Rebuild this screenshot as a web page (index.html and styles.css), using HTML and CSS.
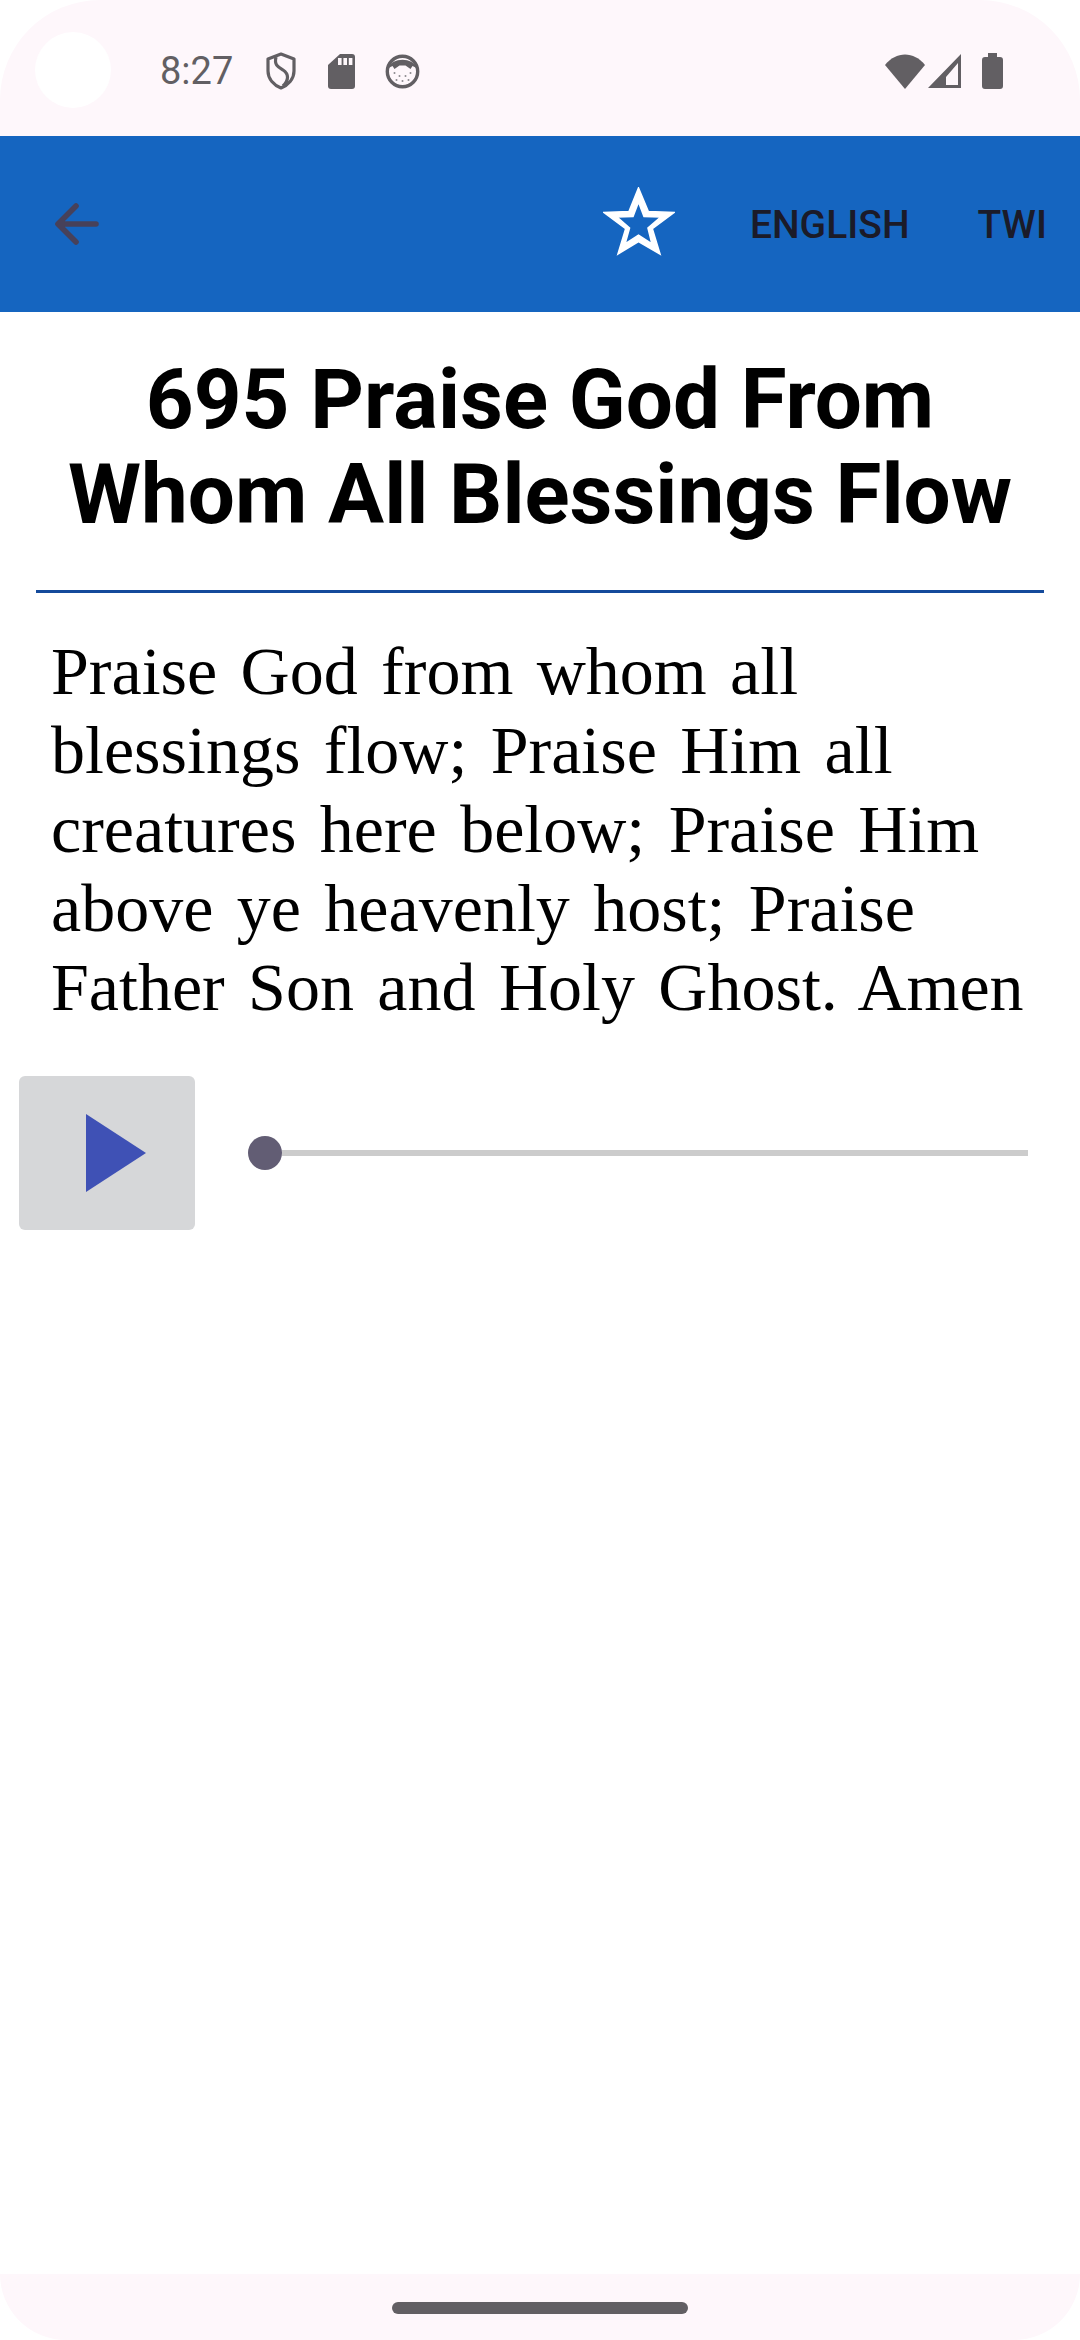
FILE: index.html
```html
<!DOCTYPE html>
<html lang="en">
<head>
    <meta charset="UTF-8">
    <meta name="viewport" content="width=device-width, initial-scale=1.0">
    <title>695 Praise God From Whom All Blessings Flow</title>
    <link rel="stylesheet" href="styles.css">
</head>
<body>
    <div class="status-bar">
        <div class="camera"></div>
        <span class="time">8:27</span>
        <svg class="ic-shield" width="30" height="38" viewBox="0 0 30 38">
            <path d="M15 2 L28 7 V19 C28 27 22 33 15 36 C8 33 2 27 2 19 V7 Z" fill="none" stroke="#625f63" stroke-width="3.2" stroke-linejoin="round"/>
            <path d="M10 5 C8 13 12 15 17 18 C23 22 23 28 17 34" fill="none" stroke="#625f63" stroke-width="3.2"/>
        </svg>
        <svg class="ic-sd" width="27" height="35" viewBox="0 0 27 35">
            <path d="M12 0 H24 Q27 0 27 3 V32 Q27 35 24 35 H3 Q0 35 0 32 V11 Z" fill="#625f63"/>
            <rect x="10" y="4" width="3.6" height="7" fill="#fef7fb"/>
            <rect x="15.4" y="4" width="3.6" height="7" fill="#fef7fb"/>
            <rect x="20.8" y="4" width="3.6" height="7" fill="#fef7fb"/>
        </svg>
        <svg class="ic-face" width="35" height="35" viewBox="0 0 34 35">
            <circle cx="17" cy="17.5" r="15.2" fill="#fef7fb" stroke="#625f63" stroke-width="3.4"/>
            <path d="M3 14 C6 3 28 3 31 14 L27 12 L25 15 L20 11.5 H14 L9 15 L7 12 Z" fill="#625f63"/>
            <g fill="#8d8a8e">
                <circle cx="9" cy="19" r="1"/><circle cx="14" cy="22" r="1"/><circle cx="20" cy="22" r="1"/><circle cx="25" cy="19" r="1"/>
                <circle cx="11" cy="26" r="1"/><circle cx="17" cy="27" r="1"/><circle cx="23" cy="26" r="1"/>
            </g>
        </svg>
        <div class="status-right">
            <svg class="ic-wifi" width="40" height="35" viewBox="0 0 40 35">
                <path d="M0 11 C11 -3 29 -3 40 11 L20 35 Z" fill="#625f63"/>
            </svg>
            <svg class="ic-signal" width="34" height="34" viewBox="0 0 34 34">
                <path fill-rule="evenodd" d="M33 0 V34 H0 Z M30 9 L18 23 V31 H30 Z" fill="#625f63"/>
            </svg>
            <svg class="ic-battery" width="21" height="36" viewBox="0 0 21 36">
                <path d="M6 0 H15 V4 H18 Q21 4 21 7 V33 Q21 36 18 36 H3 Q0 36 0 33 V7 Q0 4 3 4 H6 Z" fill="#625f63"/>
            </svg>
        </div>
    </div>

    <div class="app-bar">
        <svg class="ic-back" width="44" height="44" viewBox="0 0 44 44">
            <path d="M41 22 H4 M21 4 L3 22 L21 40" fill="none" stroke="#47415a" stroke-width="5.6" stroke-linejoin="round" stroke-linecap="round"/>
        </svg>
        <svg class="ic-star" width="72" height="70" viewBox="0 0 72 70">
            <path fill-rule="evenodd" d="M35.5 1 L45.3 24.5 L71 25.5 L49.3 41.7 L57 67 L35.5 54.5 L15 67 L22.7 41.7 L1 25.5 L26 24.5 Z M35.5 15 L30 29.5 L14 30 L26.5 41 L22 57 L35.5 48.3 L49 57 L45 41 L57.7 30 L41 29.5 Z" fill="#fff" stroke="#fff" stroke-width="1.6"/>
        </svg>
        <span class="tab tab-english">ENGLISH</span>
        <span class="tab">TWI</span>
    </div>

    <h1 class="title">695 Praise God From<br>Whom All Blessings Flow</h1>
    <hr class="divider">
    <p class="lyrics">Praise God from whom all blessings flow; Praise Him all creatures here below; Praise Him above ye heavenly host; Praise Father Son and Holy Ghost. Amen</p>

    <div class="player">
        <div class="play-btn">
            <svg width="60" height="78" viewBox="0 0 60 78">
                <path d="M0 0 L60 39 L0 78 Z" fill="#3f51b5"/>
            </svg>
        </div>
        <div class="slider">
            <div class="thumb"></div>
            <div class="track"></div>
        </div>
    </div>

    <div class="nav-bar">
        <div class="home-pill"></div>
    </div>
</body>
</html>
```

FILE: styles.css
```css
html, body {
    margin: 0;
    height: 2340px;
    overflow: hidden;
    background-color: #ffffff;
}
body {
    display: flex;
    flex-direction: column;
    font-family: Roboto, sans-serif;
}
.status-bar {
    height: 136px;
    flex-shrink: 0;
    display: flex;
    align-items: center;
    padding-top: 6px;
    padding-left: 35px;
    padding-right: 77px;
    box-sizing: border-box;
    background-color: #fef7fb;
    border-radius: 100px 100px 0 0;
}
.camera {
    width: 76px;
    height: 76px;
    border-radius: 50%;
    background-color: #ffffff;
    margin-right: 49px;
    margin-top: -3px;
}
.time {
    font-size: 38px;
    color: #625f63;
    margin-right: 33px;
    line-height: 44px;
}
.status-bar svg {
    flex-shrink: 0;
}
.ic-shield {
    margin-right: 32px;
}
.ic-sd {
    margin-right: 30px;
}
.status-right {
    margin-left: auto;
    display: flex;
    align-items: center;
    gap: 3px;
}
.ic-battery {
    margin-left: 17px;
}
.app-bar {
    height: 176px;
    flex-shrink: 0;
    display: flex;
    align-items: center;
    padding-left: 55px;
    padding-right: 33px;
    box-sizing: border-box;
    background-color: #1565c0;
}
.ic-back {
    margin-right: auto;
}
.ic-star {
    margin-right: 75px;
    margin-top: -4px;
}
.tab {
    font-size: 39px;
    font-weight: 500;
    padding-top: 2px;
    color: #1b1b29;
}
.tab-english {
    margin-right: 68px;
}
.title {
    margin: 0;
    padding: 40px 20px 0;
    font-size: 83.5px;
    font-weight: 700;
    line-height: 95px;
    text-align: center;
    color: #000000;
}
.divider {
    margin: 48px 36px 0;
    border: none;
    height: 3px;
    background-color: #144a9b;
}
.lyrics {
    margin: 0;
    padding: 39px 20px 0 51px;
    font-family: "Liberation Serif", serif;
    font-size: 68px;
    word-spacing: 6.4px;
    line-height: 79px;
    color: #000000;
}
.player {
    display: flex;
    align-items: center;
    padding-left: 19px;
    padding-right: 52px;
    margin-top: 49px;
}
.play-btn {
    width: 176px;
    height: 154px;
    display: flex;
    align-items: center;
    justify-content: center;
    background-color: #d6d7d9;
    border-radius: 6px;
    margin-right: 53px;
}
.play-btn svg {
    margin-left: 17px;
}
.slider {
    flex: 1;
    display: flex;
    align-items: center;
}
.thumb {
    width: 34px;
    height: 34px;
    border-radius: 50%;
    background-color: #625d74;
}
.track {
    flex: 1;
    height: 6px;
    background-color: #cccccc;
}
.nav-bar {
    margin-top: auto;
    height: 66px;
    flex-shrink: 0;
    display: flex;
    justify-content: center;
    padding-top: 28px;
    box-sizing: border-box;
    background-color: #fef7fb;
    border-radius: 0 0 100px 100px;
}
.home-pill {
    width: 296px;
    height: 12px;
    border-radius: 6px;
    background-color: #625f63;
}
```
